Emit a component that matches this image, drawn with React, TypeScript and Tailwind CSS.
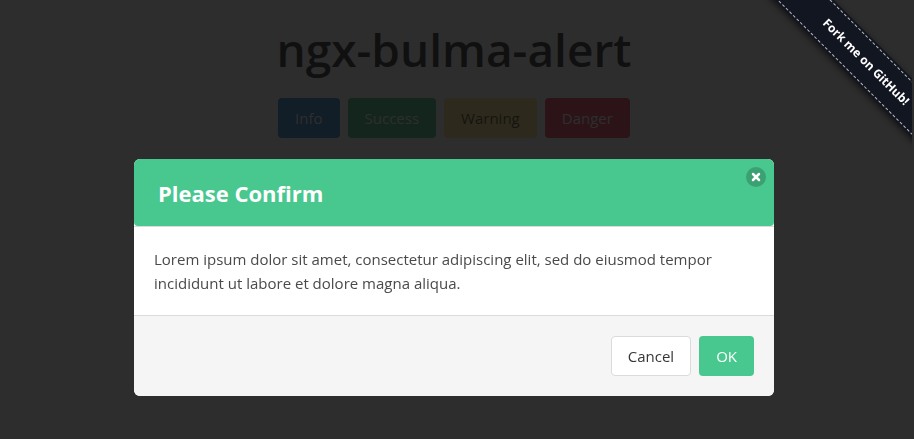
import React from "react";
import { X } from "lucide-react";

const actions = [
  { label: "Info", style: "bg-[#3e8ed0] text-white" },
  { label: "Success", style: "bg-[#48c78e] text-white" },
  { label: "Warning", style: "bg-[#ffe08a] text-black/70" },
  { label: "Danger", style: "bg-[#f14668] text-white" },
];

function ForkRibbon() {
  return (
    <div className="pointer-events-none fixed top-0 right-0.5 z-20 h-40 w-40 overflow-hidden">
      <a
        href="#fork"
        className="pointer-events-auto absolute top-[41px] -right-[94px] flex h-[42px] w-[280px] rotate-45 bg-[#121621] py-0.5 shadow-[0_2px_6px_rgba(0,0,0,0.6)]"
      >
        <span className="flex grow items-center justify-center border-y border-dashed border-white/70 text-[12px] font-bold text-white">
          Fork me on GitHub!
        </span>
      </a>
    </div>
  );
}

function ConfirmDialog() {
  return (
    <div className="fixed inset-0 z-10 flex items-start justify-center overflow-auto bg-[#0a0a0a]/86 pt-[159px] pr-1.5">
      <section
        role="dialog"
        aria-modal="true"
        aria-labelledby="dialog-title"
        className="w-[640px] max-w-full overflow-hidden rounded-md bg-white"
      >
        <header className="relative border-b border-[#dbdbdb]">
          <h2
            id="dialog-title"
            className="rounded bg-[#48c78e] px-6 pt-[19px] pb-[17px] text-[22px] leading-[31px] font-bold text-white"
          >
            Please Confirm
          </h2>
          <button
            aria-label="Close"
            className="absolute top-2 right-2 flex size-5 items-center justify-center rounded-full bg-[#0a0a0a]/20 text-white"
          >
            <X size={12} strokeWidth={5} />
          </button>
        </header>
        <p className="p-5 text-[15px] leading-6 text-[#4a4a4a]">
          Lorem ipsum dolor sit amet, consectetur adipiscing elit, sed do
          eiusmod tempor incididunt ut labore et dolore magna aliqua.
        </p>
        <footer className="flex justify-end gap-2 border-t border-[#dbdbdb] bg-[#f5f5f5] p-5 text-[15px]">
          <button className="h-10 rounded border border-[#dbdbdb] bg-white px-4 text-[#363636]">
            Cancel
          </button>
          <button className="h-10 rounded border border-transparent bg-[#48c78e] px-4 text-white">
            OK
          </button>
        </footer>
      </section>
    </div>
  );
}

export default function App() {
  return (
    <div className="min-h-screen bg-white font-['Open_Sans','Noto_Sans',sans-serif]">
      <main className="flex flex-col items-center pt-5 pr-1.5">
        <h1 className="text-[46px] leading-[58px] font-semibold text-[#363636]">
          ngx-bulma-alert
        </h1>
        <div className="mt-5 flex gap-2 text-[15px]">
          {actions.map((action) => (
            <button
              key={action.label}
              className={
                "h-10 rounded border border-transparent px-4 " + action.style
              }
            >
              {action.label}
            </button>
          ))}
        </div>
      </main>
      <ConfirmDialog />
      <ForkRibbon />
    </div>
  );
}
